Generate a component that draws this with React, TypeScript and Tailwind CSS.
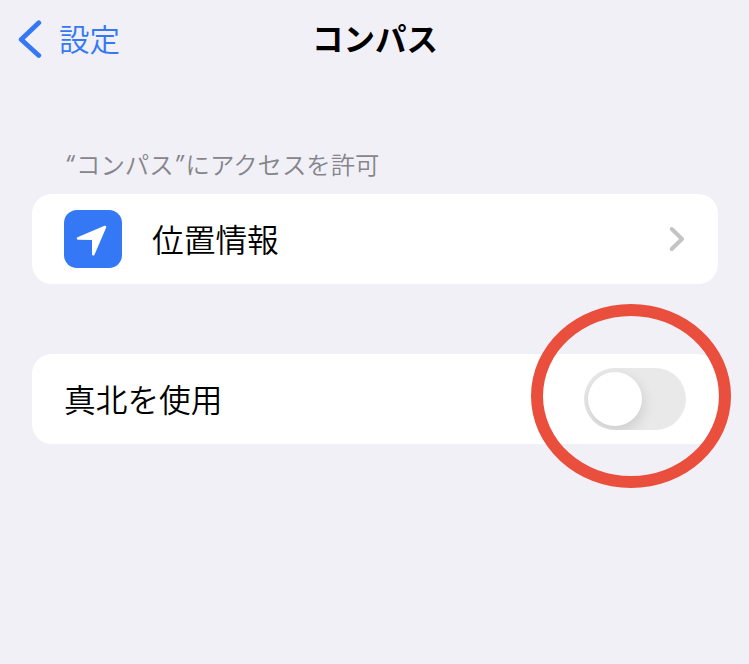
import type { ReactNode } from 'react';

function NavBar() {
  return (
    <header className="grid h-20 grid-cols-3 items-center">
      <a className="flex items-center pl-[18px] text-[#3478f6]">
        <svg width="24" height="40" viewBox="0 0 24 40" fill="none" className="shrink-0">
          <path d="M20.8 2.8 3.2 19.5l17.6 16" stroke="currentColor" strokeWidth="4.8" strokeLinecap="round" strokeLinejoin="round" />
        </svg>
        <span className="ml-[17px] -mt-[5px] text-[30.5px] font-[350] leading-10">設定</span>
      </a>
      <h1 className="-mt-[7px] whitespace-nowrap pl-px text-center text-[31.5px] font-bold leading-10 text-black">コンパス</h1>
    </header>
  );
}

function Card({ children }: { children: ReactNode }) {
  return (
    <div className="flex h-[90px] items-center justify-between rounded-[20px] bg-white px-8">{children}</div>
  );
}

function LocationIcon() {
  return (
    <span className="flex size-[58px] items-center justify-center rounded-[13px] bg-[#3478f6]">
      <svg width="58" height="58" viewBox="0 0 58 58">
        <path
          d="M41 17 29.3 44.2V28.8L14 28.4Z"
          fill="white"
          stroke="white"
          strokeWidth="2.6"
          strokeLinejoin="round"
        />
      </svg>
    </span>
  );
}

function Toggle() {
  return (
    <button role="switch" aria-checked="false" className="flex h-[62px] w-[102px] items-center overflow-hidden rounded-full bg-[#e9e9e9] p-1">
      <span className="size-[54px] rounded-full bg-white shadow-[1px_5px_14px_rgba(0,0,0,0.13)]" />
    </button>
  );
}

export default function App() {
  return (
    <div className="h-[664px] w-[749px] overflow-hidden bg-[#f1f0f6] font-['Noto_Sans_CJK_JP',sans-serif]">
      <NavBar />
      <main className="pl-8 pr-[31px] pt-16">
        <p className="flex h-[50px] items-start pl-8 text-[24.4px] font-[350] leading-10 text-[#85858b]">
          <span className="w-[12px] font-['Inter',sans-serif] text-[23px] font-normal italic">“</span>
          <span>コンパス</span>
          <span className="w-[12px] font-['Inter',sans-serif] text-[23px] font-normal italic">”</span>
          <span>にアクセスを許可</span>
        </p>
        <Card>
          <div className="flex items-center">
            <LocationIcon />
            <span className="ml-[30px] pb-[3px] text-[31.7px] font-[350] leading-10 text-black">位置情報</span>
          </div>
          <svg width="18" height="28" viewBox="0 0 18 28" fill="none">
            <path d="m3.7 4 10.3 10L3.7 24" stroke="#c4c4c6" strokeWidth="4" strokeLinecap="round" strokeLinejoin="round" />
          </svg>
        </Card>
        <div className="relative mt-[70px]">
          <Card>
            <span className="pb-[3px] text-[31.7px] font-[350] leading-10 text-black">真北を使用</span>
            <Toggle />
          </Card>
          <div className="pointer-events-none absolute -right-[13px] -top-[50px] h-[184px] w-[200px] rounded-[50%] border-[12px] border-[#ea4e3d]" />
        </div>
      </main>
    </div>
  );
}
